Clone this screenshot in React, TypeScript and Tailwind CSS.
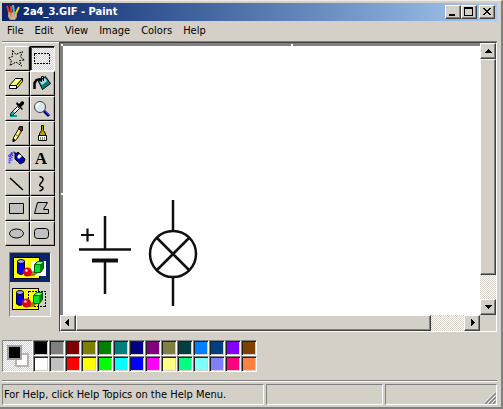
import type { ReactNode } from "react";

const raised = "border border-t-white border-l-white border-r-[#404040] border-b-[#404040] bg-[#d4d0c8] shadow-[inset_-1px_-1px_0_#808080]";
const checker = "bg-[repeating-conic-gradient(#d4d0c8_0_25%,#ffffff_0_50%)] bg-[length:2px_2px]";

const swatches = [
  "#000000", "#808080", "#800000", "#808000", "#008000", "#008080", "#000080", "#800080", "#808040", "#004040", "#0080ff", "#004080", "#8000ff", "#804000",
  "#ffffff", "#c0c0c0", "#ff0000", "#ffff00", "#00ff00", "#00ffff", "#0000ff", "#ff00ff", "#ffff80", "#00ff80", "#80ffff", "#8080ff", "#ff0080", "#ff8040",
];

const tools: { name: string; art: ReactNode }[] = [
  { name: "Free-form select", art: <path d="M6.500 2.500l3.500 4 6.500-3-2 5.500 4 3-5 .5 2 5.500-5.500-4-6 3.500 1.500-5-3-2.500 4-1.500z" fill="none" stroke="#000" strokeDasharray="2 1" /> },
  { name: "Select", art: <path d="M3.500 5.500h15v10h-15z" fill="none" stroke="#000" strokeDasharray="2 1" shapeRendering="crispEdges" /> },
  { name: "Eraser", art: <g stroke="#000"><path d="M3.500 12.500l6-7h7l-6 7z" fill="#ffff80" /><path d="M3.500 12.500v3h7v-3z" fill="#fff" /><path d="M10.500 12.500l6-7v3l-6 7z" fill="#ffff00" /></g> },
  { name: "Fill", art: <g stroke="#000"><path d="M7.500 8.500l7-5 5 7-8 6z" fill="#008080" /><path d="M9 9l5-4 2 3-5 4z" fill="#b0dede" stroke="none" /><path d="M10.500 9V3.500h2V8" fill="none" /><path d="M10 6L5.500 7 3.500 10v6" fill="none" strokeWidth="2.500" /></g> },
  { name: "Pick color", art: <g><path d="M4 17h7v2H4z" fill="#00a0a0" /><path d="M4.500 17.500v-2l7-7 2 2-7 7z" fill="#fff" stroke="#000" /><path d="M5 17l3-3" stroke="#00a0a0" strokeWidth="2" /><path d="M10 6l6 6 1-1-2-2 3-3V4l-2-1-3 3-2-2z" fill="#000" /></g> },
  { name: "Magnifier", art: <g><circle cx="9" cy="9" r="5.500" fill="#d9e7ef" stroke="#404040" /><path d="M5.500 9q0-3.500 3.500-3.500" fill="none" stroke="#fff" strokeWidth="2" /><path d="M13 13l5 5" stroke="#000080" strokeWidth="3" /><path d="M14 13l4 4" stroke="#4040ff" /></g> },
  { name: "Pencil", art: <g stroke="#000"><path d="M7.500 18.500v-4l6-10 3 2-6 10z" fill="#ffff80" /><path d="M12.500 5.500l1-2h3v3l-1 2z" fill="#a01010" /><path d="M10 12l2 1 3-5" fill="none" stroke="#a06000" /><path d="M7 16l2 1-2 2z" fill="#000" /></g> },
  { name: "Brush", art: <g stroke="#000"><path d="M10.500 2.500h2v5l2 3v2h-6v-2l2-3z" fill="#b0a000" /><path d="M7.500 12.500h8v5h-8z" fill="#fff" /><path d="M9.500 14v3M11.500 14v3M13.500 14v3" stroke="#808080" /></g> },
  { name: "Airbrush", art: <g><path d="M9 7l3-3 7 7-1 3-4 2-5-5z" fill="#0000c0" stroke="#000" /><path d="M11 9l2-3 3 2-3 3z" fill="#fff" /><path d="M8 4l3 1-2 3z" fill="#000" /><path d="M8.500 4.500C5 4 3.500 7 3.500 16M7 7Q5 9 5.500 13M6 5L2 9" fill="none" stroke="#2020ff" strokeDasharray="1 1" strokeWidth="2" /></g> },
  { name: "Text", art: <text x="10" y="16" textAnchor="middle" className="font-['Liberation_Serif',serif] text-[17px] font-bold">A</text> },
  { name: "Line", art: <path d="M4 5l13 12" stroke="#000" strokeWidth="1.500" /> },
  { name: "Curve", art: <path d="M8.500 3.500c5 1 4 4 1.500 6.500s-1 3 1 4 1 3-2.500 4" fill="none" stroke="#000" strokeWidth="1.500" /> },
  { name: "Rectangle", art: <path d="M3.500 5.500h14v10h-14z" fill="#c0c0c0" stroke="#000" /> },
  { name: "Polygon", art: <path d="M6.500 4.500h10l-4 7h5v4h-14z" fill="#c0c0c0" stroke="#000" /> },
  { name: "Ellipse", art: <ellipse cx="10.500" cy="10.500" rx="7" ry="4.500" fill="#c0c0c0" stroke="#000" /> },
  { name: "Rounded rectangle", art: <rect x="3.500" y="5.500" width="14" height="10" rx="3" fill="#c0c0c0" stroke="#000" /> },
];

function Shapes({ opaque }: { opaque: boolean }) {
  return (
    <svg className="h-6 w-[38px] shrink-0" viewBox="0 0 38 24" shapeRendering="crispEdges">
      <path d="M1.500 1.500h26v21h-26z" fill="#ffff00" stroke="#000" />
      {opaque ? <path d="M19 5h15v15H19z" fill="#fff" /> : <path d="M17.500 4.500h17v15h-17z" fill="none" stroke="#000" strokeDasharray="2 1" />}
      <g shapeRendering="auto">
        <path d="M5.500 5v12q3.500 3 7 0V5z" fill="#0000e0" stroke="#000" />
        <ellipse cx="9" cy="5.500" rx="3.500" ry="2" fill="#a0a0ff" stroke="#000" />
        <path d="M15 20l7 0 4-3-5-2z" fill="#a08000" />
        <circle cx="15.500" cy="16" r="4.500" fill="#e00020" />
        <circle cx="14.500" cy="14.500" r="1.200" fill="#fff" />
        <path d="M22.500 8.500l3-3h6v7l-3 4h-6z" fill="#008000" stroke="#006000" />
        <path d="M23 9h5v7h-5z" fill="#00e030" />
        <path d="M24 8l2-2h5l-2 2z" fill="#80ff80" />
      </g>
    </svg>
  );
}

function ScrollButton({ label, path }: { label: string; path: string }) {
  return (
    <button aria-label={label} className={`size-4 shrink-0 ${raised}`}>
      <svg viewBox="0 0 14 14" className="size-3.5" shapeRendering="crispEdges"><path d={path} /></svg>
    </button>
  );
}

function TitleButton({ label, path }: { label: string; path: string }) {
  return (
    <button aria-label={label} className={`h-3.5 w-4 ${raised}`}>
      <svg viewBox="0 0 14 12" className="h-3 w-3.5" shapeRendering="crispEdges"><path d={path} fillRule="evenodd" /></svg>
    </button>
  );
}

export default function App() {
  return (
    <main className="flex min-h-screen flex-col border-t border-r-2 border-b-2 border-t-[#eeece6] border-r-[#808080] border-b-[#808080] bg-[#d4d0c8] pt-0.5 pr-1 pl-0.5 font-['DejaVu_Sans_Condensed','DejaVu_Sans',sans-serif] text-[11px] text-black">
      <header className="flex h-[18px] items-center bg-linear-to-r from-[#0a246a] to-[#a6caf0] pr-0.5 pl-[3px]">
        <svg viewBox="0 0 16 16" className="mr-0.5 size-4">
          <path d="M3 8h9v5l-2 3H5l-2-3z" fill="#b89078" />
          <path d="M4 8L2 2M6 9L6 2" stroke="#e83828" strokeWidth="2" />
          <path d="M9 9L8 1" stroke="#40c8b0" strokeWidth="2" />
          <path d="M11 9l3-6" stroke="#f0d020" strokeWidth="2" />
          <path d="M4 11l3 4M8 9v6M11 10l-2 5" stroke="#e8c8a8" />
        </svg>
        <h1 className="flex-1 text-[11px] leading-4 font-bold whitespace-nowrap text-white">2a4_3.GIF - Paint</h1>
        <div className="flex">
          <TitleButton label="Minimize" path="M3 8h6v2H3z" />
          <TitleButton label="Maximize" path="M2 1h9v9H2zM3 3v6h7V3z" />
          <span className="w-0.5" />
          <TitleButton label="Close" path="M3 2h2v1h1v1h2V3h1V2h2v1h-1v1H9v1H8v1h1v1h1v1h1v1H9V8H8V7H6v1H5v1H3V8h1V7h1V6h1V5H5V4H4V3H3z" />
        </div>
      </header>
      <nav className="flex h-5 items-center gap-[11px] pl-[5px]">
        {["File", "Edit", "View", "Image", "Colors", "Help"].map((m) => <button key={m} className="leading-4">{m}</button>)}
      </nav>
      <div className="flex flex-1 border-t border-[#808080]">
        <aside className="w-[57px] shrink-0 border-t border-white pt-[3px] pl-[3px]">
          <div className="grid w-[50px] grid-cols-2">
            {tools.map((t, i) => (
              <button key={t.name} aria-label={t.name} className={`size-[25px] border ${i === 1 ? `border-t-black border-l-black border-r-white border-b-white shadow-[inset_1px_1px_0_#404040] ${checker}` : "border-t-white border-l-white border-r-black border-b-black shadow-[inset_-1px_-1px_0_#a8a49c]"}`}>
                <svg viewBox="0 0 22 22" className="size-[22px]">{t.art}</svg>
              </button>
            ))}
          </div>
          <div className="mt-1.5 ml-1 h-[65px] w-[42px] border border-t-[#808080] border-l-[#808080] border-r-white border-b-white">
            <button aria-label="Opaque" className="flex h-[29px] w-full items-center bg-[#0a246a] pl-0.5"><Shapes opaque /></button>
            <button aria-label="Transparent" className="mt-0.5 flex h-[29px] w-full items-center pl-px"><Shapes opaque={false} /></button>
          </div>
        </aside>
        <section className="flex flex-1 flex-col border-t border-r border-b border-l border-t-[#404040] border-r-white border-b-white border-l-[#404040]">
          <div className="flex flex-1">
            <div className="relative flex-1 bg-[#808080] pt-[3px] pl-[3px]">
              <div className="flex h-full items-end bg-white">
                <svg viewBox="0 0 140 125" className="ml-[7px] h-[125px] w-[140px]">
                  <g fill="none" stroke="#101010" strokeWidth="2.500">
                    <path d="M35 26v33M9 59.500h52M35 71v33M103 10v31M103 87v29" />
                    <path d="M22 70.500h26" strokeWidth="4" />
                    <path d="M11 45h13M17.500 38.500v13" strokeWidth="2.200" />
                    <circle cx="103" cy="64" r="23" />
                    <path d="M87 48l32 32M119 48L87 80" />
                  </g>
                </svg>
              </div>
              <i className="absolute top-px left-px size-0.5 bg-white" />
              <i className="absolute top-px left-[55%] size-0.5 bg-white" />
              <i className="absolute top-[55%] left-px size-0.5 bg-white" />
            </div>
            <div className={`flex w-4 flex-col ${checker}`}>
              <ScrollButton label="Scroll up" path="M7 5h1v1h1v1h1v1h1v1H4V8h1V7h1V6h1z" />
              <div className={`flex-1 ${raised}`} />
              <span className="h-6" />
              <ScrollButton label="Scroll down" path="M4 5h7v1h-1v1H9v1H8v1H7V8H6V7H5V6H4z" />
            </div>
          </div>
          <div className="flex h-4 bg-[#d4d0c8] pr-4">
            <div className={`flex flex-1 ${checker}`}>
              <ScrollButton label="Scroll left" path="M4 6h1V5h1V4h1V3h1v7H7V9H6V8H5V7H4z" />
              <div className={`flex-1 ${raised}`} />
              <span className="w-[33px]" />
              <ScrollButton label="Scroll right" path="M6 3h1v1h1v1h1v1h1v1H9v1H8v1H7v1H6z" />
            </div>
          </div>
        </section>
      </div>
      <section aria-label="Colors" className="flex h-12 items-start pt-2">
        <div className={`flex h-8 w-[31px] items-start border border-t-[#808080] border-l-[#808080] border-r-white border-b-white p-1 ${checker}`}>
          <div className="relative size-[15px] border-2 border-[#a0a0a0] bg-black">
            <i className="absolute top-1.5 left-1.5 size-3.5 border-2 border-[#b8b5af] bg-white [clip-path:polygon(7px_0,100%_0,100%_100%,0_100%,0_7px,7px_7px)]" />
          </div>
        </div>
        <div className="grid grid-cols-14">
          {swatches.map((c) => (
            <button key={c} aria-label={`Color ${c}`} style={{ backgroundColor: c }} className="size-4 border border-t-[#808080] border-l-[#808080] border-r-white border-b-white shadow-[inset_1px_1px_0_#202020,inset_-1px_-1px_0_#d4d0c8]" />
          ))}
        </div>
      </section>
      <footer className="flex h-[27px] shrink-0 gap-0.5 border-t border-[#808080] pt-[3px] pb-0.5 shadow-[inset_0_1px_0_#fff]">
        <p className="flex-1 border border-t-[#808080] border-l-[#808080] border-r-white border-b-white pl-px leading-5 whitespace-nowrap">For Help, click Help Topics on the Help Menu.</p>
        <div className="w-[117px] border border-t-[#808080] border-l-[#808080] border-r-white border-b-white" />
        <div className="flex w-28 items-end justify-end border border-t-[#808080] border-l-[#808080] border-r-white border-b-white">
          <svg viewBox="0 0 12 12" className="size-3"><path d="M1 12L12 1M5 12l7-7M9 12l3-3" stroke="#808080" strokeWidth="1.500" /><path d="M0 11L11 0M4 11l7-7M8 11l3-3" stroke="#fff" strokeWidth=".7" /></svg>
        </div>
      </footer>
    </main>
  );
}
